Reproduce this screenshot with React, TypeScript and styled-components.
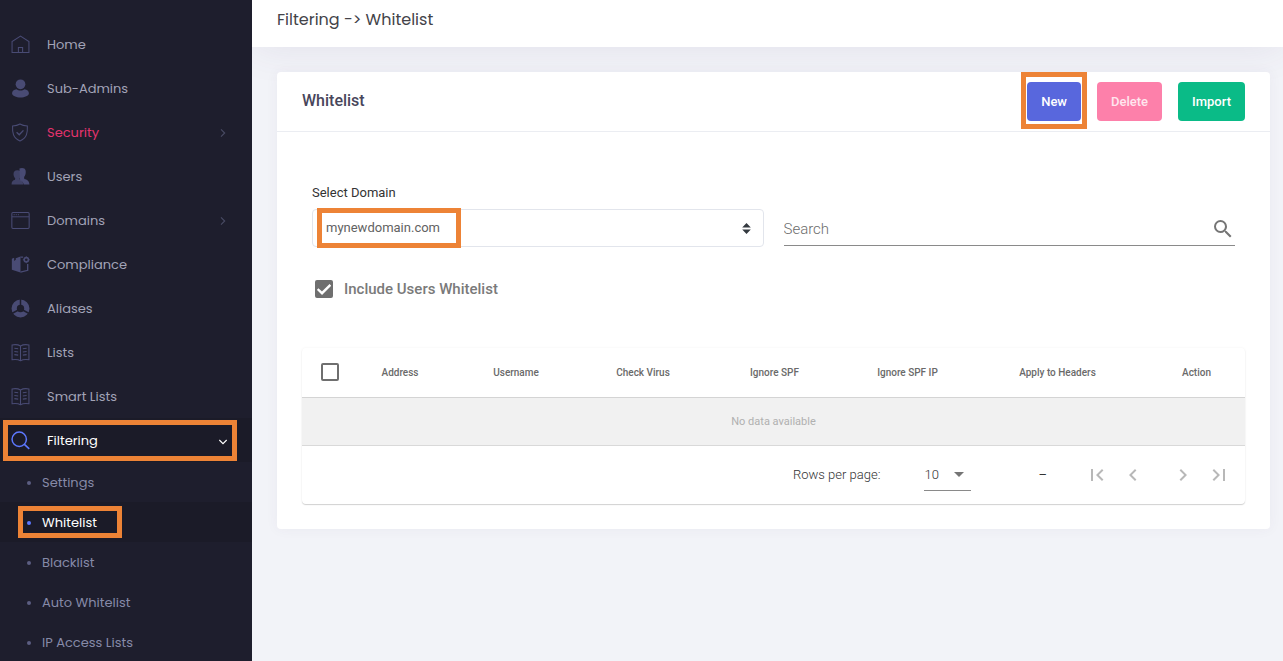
import React from "react";
import styled, { createGlobalStyle, css } from "styled-components";

const MENU_FONT = `Poppins, Inter, "Open Sans", sans-serif`;
const ORANGE = "#ed8336";

const GlobalStyle = createGlobalStyle`
  *, *::before, *::after { box-sizing: border-box; }
  body {
    margin: 0;
    background: #f2f3f8;
    color: #464457;
    font-family: Roboto, "Liberation Sans", sans-serif;
    font-size: 13px;
  }
  button, input, select { font: inherit; color: inherit; }
`;

const Page = styled.div`
  display: flex;
  min-height: 100vh;
`;

/* ---------- Side menu ---------- */

const Sidebar = styled.nav`
  position: sticky;
  top: 0;
  flex: 0 0 252px;
  height: 100vh;
  padding-top: 22px;
  overflow-y: auto;
  scrollbar-width: none;
  background: #1e1e2d;
  font-family: ${MENU_FONT};
`;

const MenuList = styled.ul`
  margin: 0;
  padding: 0;
  list-style: none;
`;

const MenuLink = styled.a<{ $active?: boolean; $alert?: boolean }>`
  position: relative;
  display: flex;
  align-items: center;
  height: 44px;
  padding: 2px 23px 0 11px;
  gap: 17px;
  font-size: 13px;
  text-decoration: none;
  color: ${(p) => (p.$active ? "#ffffff" : p.$alert ? "#e4336d" : "#a2a3b7")};
  background: ${(p) => (p.$active ? "#1b1b28" : "transparent")};

  & > svg {
    flex: none;
    margin-bottom: 2px;
    color: ${(p) => (p.$active ? "#5d78ff" : "#494b74")};
  }
  & > svg:last-of-type:not(:first-of-type) {
    margin: 0 0 0 auto;
    color: ${(p) => (p.$active ? "#ffffff" : "#494b64")};
  }
`;

const SubLink = styled.a<{ $active?: boolean }>`
  position: relative;
  display: flex;
  align-items: center;
  height: 40px;
  padding: 2px 0 0 27px;
  gap: 11px;
  font-size: 13px;
  text-decoration: none;
  color: ${(p) => (p.$active ? "#ffffff" : "#868aa8")};
  background: ${(p) => (p.$active ? "#1b1b28" : "transparent")};

  &::before {
    content: "";
    width: 4px;
    height: 4px;
    border-radius: 50%;
    background: ${(p) => (p.$active ? "#5d78ff" : "#5c5e81")};
  }
`;

/* Orange frame laid over the control it points out. */
const Marker = styled.span<{ $inset: string; $width?: number }>`
  position: absolute;
  inset: ${(p) => p.$inset};
  width: ${(p) => (p.$width ? `${p.$width}px` : "auto")};
  border: 5px solid ${ORANGE};
  pointer-events: none;
`;

/* ---------- Main column ---------- */

const Main = styled.main`
  flex: 1;
  min-width: 0;
`;

const TopBar = styled.header`
  display: flex;
  align-items: center;
  height: 47px;
  padding: 0 25px 8px;
  background: #ffffff;
  box-shadow: 0 0 40px rgba(82, 63, 105, 0.1);
`;

const PageTitle = styled.h1`
  margin: 0;
  font-family: ${MENU_FONT};
  font-size: 16px;
  font-weight: 400;
  color: #434349;
`;

const Card = styled.section`
  margin: 25px 13px 25px 25px;
  background: #ffffff;
  border-radius: 4px;
  box-shadow: 0 0 13px rgba(82, 63, 105, 0.05);
`;

const CardHeader = styled.div`
  display: flex;
  align-items: center;
  justify-content: space-between;
  height: 60px;
  padding: 0 25px;
  border-bottom: 1px solid #ebedf2;
`;

const CardTitle = styled.h2`
  margin: 0;
  padding-bottom: 2px;
  font-size: 16px;
  font-weight: 500;
  color: #48465b;
`;

const Actions = styled.div`
  display: flex;
  gap: 16px;
`;

const ActionButton = styled.button<{ $color: string; $text?: string }>`
  position: relative;
  height: 39px;
  padding: 0 14px;
  border: 0;
  border-radius: 4px;
  background: ${(p) => p.$color};
  color: ${(p) => p.$text ?? "#ffffff"};
  font-size: 13px;
  font-weight: 500;
  cursor: pointer;
`;

const CardBody = styled.div`
  padding: 51px 25px 25px;
`;

const Filters = styled.div`
  display: grid;
  grid-template-columns: 1fr 1fr;
  align-items: end;
  gap: 0 20px;
  padding: 0 10px;
`;

const Field = styled.div`
  display: flex;
  flex-direction: column;
  gap: 6px;
`;

const FieldLabel = styled.label`
  line-height: 20px;
  color: #333333;
`;

const SelectBox = styled.div`
  position: relative;

  & > svg {
    position: absolute;
    right: 13px;
    top: 14px;
    pointer-events: none;
  }
`;

const DomainSelect = styled.select`
  display: block;
  width: 100%;
  height: 38px;
  padding: 0 30px 2px 13px;
  appearance: none;
  border: 1px solid #e2e5ec;
  border-radius: 4px;
  background: #ffffff;
  color: #626262;
`;

const SearchBox = styled.div`
  display: flex;
  align-items: center;
  height: 35px;
  margin-bottom: 1px;
  padding-top: 2px;
  border-bottom: 1px solid #8a8a8a;
`;

const SearchInput = styled.input`
  flex: 1;
  min-width: 0;
  padding: 0;
  border: 0;
  outline: 0;
  background: transparent;
  font-size: 15px;
  font-weight: 300;

  &::placeholder { color: #6c6c6c; opacity: 1; }
`;

const CheckLabel = styled.label`
  display: flex;
  align-items: center;
  gap: 11px;
  height: 24px;
  margin: 30px 13px 0;
  font-size: 15px;
  font-weight: 500;
  color: #7a7a7a;
`;

const CheckBox = styled.input`
  flex: none;
  width: 18px;
  height: 18px;
  margin: 0;
  appearance: none;
  border: 2px solid #6f6f6f;
  border-radius: 2px;
  background: #ffffff;

  &:checked {
    background: #6f6f6f url("data:image/svg+xml,%3Csvg xmlns='http://www.w3.org/2000/svg' viewBox='0 0 14 14'%3E%3Cpath d='M.6 7l4.400 4.200 8.400-8.400' fill='none' stroke='white' stroke-width='2.400'/%3E%3C/svg%3E") center / 14px 14px no-repeat;
  }
`;

const TableCard = styled.div`
  margin-top: 47px;
  border-radius: 4px;
  box-shadow: 0 1px 1px rgba(0, 0, 0, 0.17), 0 0 3px rgba(0, 0, 0, 0.05);
`;

const Table = styled.table`
  width: 100%;
  table-layout: fixed;
  border-collapse: collapse;
`;

const HeadCell = styled.th`
  height: 49px;
  padding: 0;
  border-bottom: 1px solid #d4d4d4;
  font-size: 10px;
  font-weight: 500;
  color: #6a6a6a;
  white-space: nowrap;

  &:first-child { padding-left: 19px; }
`;

const HeadCheck = styled(CheckBox)`
  display: block;
`;

const EmptyCell = styled.td`
  height: 48px;
  padding: 0;
  border-bottom: 1px solid #d9d9d9;
  background: #f1f1f1;
  text-align: center;
  font-size: 11px;
  color: #b0b0b0;
`;

const Pager = styled.div`
  display: flex;
  align-items: center;
  justify-content: flex-end;
  height: 58px;
  padding-right: 8px;
  color: #333333;
`;

const pagerText = css`
  font-size: 13px;
  font-weight: 300;
`;

const RowsLabel = styled.label`
  ${pagerText}
  margin-right: 44px;
`;

const RowsBox = styled.div`
  position: relative;

  & > svg {
    position: absolute;
    right: 0;
    top: 4px;
    color: #757575;
    pointer-events: none;
  }
`;

const RowsSelect = styled.select`
  ${pagerText}
  display: block;
  width: 47px;
  height: 33px;
  padding: 0;
  appearance: none;
  border: 0;
  border-bottom: 1px solid #8a8a8a;
  border-radius: 0;
  background: transparent;
`;

const Range = styled.span`
  margin: 0 32px 0 67px;
`;

const PagerButtons = styled.div`
  display: flex;
  gap: 14px;
`;

const PagerGroup = styled.div`
  display: flex;
`;

const IconButton = styled.button<{ $width?: number }>`
  display: flex;
  align-items: center;
  justify-content: center;
  width: ${(p) => p.$width ?? 36}px;
  height: 32px;
  padding: 0;
  border: 0;
  background: transparent;
  color: #757575;

  &:disabled { color: #b8b8b8; }
`;

/* ---------- Icons ---------- */

const Svg = ({ size = 19, children }: { size?: number; children: React.ReactNode }) => (
  <svg width={size} height={size} viewBox="0 0 18 18" fill="none" stroke="currentColor" aria-hidden="true">
    {children}
  </svg>
);

const HomeIcon = () => (
  <Svg>
    <path d="M1 16.500V6.200L9 1l8 5.200V16.500Z" />
    <path d="M7 16.500v-4.700h4v4.700" />
  </Svg>
);
const UserIcon = () => (
  <Svg>
    <g fill="currentColor" stroke="none">
      <circle cx="9" cy="5" r="4.600" />
      <path d="M1 13.500c0-2 1.800-3.300 4.200-3.700 1 .8 2.300 1.200 3.800 1.200s2.800-.4 3.800-1.200c2.400.4 4.200 1.700 4.200 3.700 0 2.500-4 4-8 4s-8-1.500-8-4z" />
    </g>
  </Svg>
);
const ShieldIcon = () => (
  <Svg>
    <path d="M8.500 1C6.500 2.300 4 2.800 1.500 2.800c-.3 6 .3 11.500 7 14.200 6.700-2.700 7.300-8.200 7-14.200C13 2.800 10.500 2.300 8.500 1z" />
    <path d="M5.300 8.800l2.500 2.400 4-4.200" strokeWidth="1.300" />
  </Svg>
);
const UsersIcon = () => (
  <Svg>
    <g fill="currentColor" stroke="none">
      <path d="M8 1.500c2-1 5.500-.8 5.900 2 .3 2.600-.3 4.500-1.500 6l.2 1.800c2.500.6 4.600 1.400 4.900 5.200H12c-.3-2-1.500-3.200-3.400-3.800z" />
      <path d="M6 3c2.800 0 4 1.700 3.700 4.200-.2 1.500-.7 2.600-1.500 3.500l.2 1.400c2 .5 3 1.600 3.100 4.400H.5c.1-2.800 1.200-3.900 3.300-4.400l.2-1.400C3 9.600 2.500 8.500 2.400 7 2.200 4.600 3.400 3 6 3z" opacity=".8" />
    </g>
  </Svg>
);
const WindowIcon = () => (
  <Svg>
    <rect x=".8" y="1.500" width="16.400" height="15" rx="1" />
    <path d="M1 5.500h16M2.500 3.500h1m1 0h1m1 0h1" strokeWidth=".9" />
  </Svg>
);
const ComplianceIcon = () => (
  <Svg>
    <path d="M.8 3.500L3 2.600v3l1.500-1V3L9 1.500v15L.8 14z" fill="currentColor" stroke="none" />
    <path d="M9 2h2.500M9 16.200l6.800-1.700V8.500" strokeWidth="1.300" />
    <circle cx="14.500" cy="4.500" r="2" strokeWidth="1.500" />
    <path d="M14.500 1.200v1.600M14.500 6.200v1.600M11.200 4.500h1.600M16.200 4.500h1.600" strokeWidth=".8" />
  </Svg>
);
const AliasIcon = () => (
  <Svg>
    <circle cx="9" cy="9" r="6" strokeWidth="5" />
    <path d="M9 0v6M1.200 13.500L7 10.400M16.800 13.500L11 10.400" stroke="#1e1e2d" strokeWidth="1.400" />
  </Svg>
);
const BookIcon = () => (
  <Svg>
    <path d="M9 2.800C7 1.600 4 1.300 1 1.800v14c3-.5 6-.2 8 1 2-1.200 5-1.500 8-1v-14c-3-.5-6-.2-8 1zm0 0v14" />
    <path d="M3.200 5l3.600.5M3.200 8l3.600.5M3.200 11l3.600.5M14.800 5l-3.600.5M14.800 8l-3.600.5M14.800 11l-3.600.5" />
  </Svg>
);
const LensIcon = () => (
  <Svg>
    <circle cx="7.800" cy="7.800" r="6.800" strokeWidth="1.400" />
    <path d="M12.700 12.700l4.600 4.300" strokeWidth="1.500" />
  </Svg>
);
const ChevronRight = () => (
  <Svg size={12}>
    <path d="M6 3.500L11.500 9 6 14.500" strokeWidth="1.700" />
  </Svg>
);
const ChevronDown = () => (
  <Svg size={12}>
    <path d="M3.500 7.500L9 13l5.500-5.500" strokeWidth="1.700" />
  </Svg>
);

const MaterialIcon = ({ d }: { d: string }) => (
  <svg width="24" height="24" viewBox="0 0 24 24" fill="currentColor" aria-hidden="true">
    <path d={d} />
  </svg>
);

const SEARCH = "M9.500 3A6.500 6.500 0 0 1 16 9.500c0 1.610-.59 3.090-1.560 4.230l.27.27h.79l5 5-1.500 1.500-5-5v-.79l-.27-.27A6.516 6.516 0 0 1 9.500 16 6.500 6.500 0 0 1 3 9.500 6.500 6.500 0 0 1 9.500 3m0 2C7 5 5 7 5 9.500S7 14 9.500 14 14 12 14 9.500 12 5 9.500 5z";
const FIRST = "M18.410 16.590L13.820 12l4.590-4.590L17 6l-6 6 6 6zM6 6h2v12H6z";
const PREV = "M15.410 16.580L10.830 12l4.580-4.590L14 6l-6 6 6 6z";
const NEXT = "M8.590 16.580L13.170 12 8.590 7.410 10 6l6 6-6 6z";
const LAST = "M5.590 7.410L10.180 12l-4.590 4.590L7 18l6-6-6-6zM16 6h2v12h-2z";
const DROP = "M7 10l5 5 5-5z";

/* ---------- Data ---------- */

const menu = [
  { label: "Home", Icon: HomeIcon },
  { label: "Sub-Admins", Icon: UserIcon },
  { label: "Security", Icon: ShieldIcon, alert: true, more: true },
  { label: "Users", Icon: UsersIcon },
  { label: "Domains", Icon: WindowIcon, more: true },
  { label: "Compliance", Icon: ComplianceIcon },
  { label: "Aliases", Icon: AliasIcon },
  { label: "Lists", Icon: BookIcon },
  { label: "Smart Lists", Icon: BookIcon },
];

const filteringMenu = ["Settings", "Whitelist", "Blacklist", "Auto Whitelist", "IP Access Lists"];

const columns = [
  { label: "Address", width: 94 },
  { label: "Username", width: 138 },
  { label: "Check Virus", width: 116 },
  { label: "Ignore SPF", width: 147 },
  { label: "Ignore SPF IP", width: 119 },
  { label: "Apply to Headers", width: 181 },
  { label: "Action", width: 97 },
];

export default function App() {
  return (
    <>
      <GlobalStyle />
      <Page>
        <Sidebar aria-label="Main menu">
          <MenuList>
            {menu.map(({ label, Icon, alert, more }) => (
              <li key={label}>
                <MenuLink href="#" $alert={alert}>
                  <Icon />
                  {label}
                  {more && <ChevronRight />}
                </MenuLink>
              </li>
            ))}
            <li>
              <MenuLink href="#" $active>
                <LensIcon />
                Filtering
                <ChevronDown />
                <Marker $inset="2px 15px 1px 3px" />
              </MenuLink>
              <MenuList>
                {filteringMenu.map((label) => (
                  <li key={label}>
                    <SubLink href="#" $active={label === "Whitelist"}>
                      {label}
                      {label === "Whitelist" && <Marker $inset="4px auto 4px 18px" $width={104} />}
                    </SubLink>
                  </li>
                ))}
              </MenuList>
            </li>
          </MenuList>
        </Sidebar>

        <Main>
          <TopBar>
            <PageTitle>Filtering -&gt; Whitelist</PageTitle>
          </TopBar>

          <Card>
            <CardHeader>
              <CardTitle>Whitelist</CardTitle>
              <Actions>
                <ActionButton $color="#5867dd">
                  New
                  <Marker $inset="-10px -6px -8px -6px" />
                </ActionButton>
                <ActionButton $color="#fd80aa" $text="#ffe6ee">Delete</ActionButton>
                <ActionButton $color="#0abb87">Import</ActionButton>
              </Actions>
            </CardHeader>

            <CardBody>
              <Filters>
                <Field>
                  <FieldLabel htmlFor="domain">Select Domain</FieldLabel>
                  <SelectBox>
                    <DomainSelect id="domain">
                      <option>mynewdomain.com</option>
                    </DomainSelect>
                    <svg width="9" height="11" viewBox="0 0 9 11" fill="#343a40" aria-hidden="true">
                      <path d="M4.500 0L8.800 4.500H.2zM4.500 11L.2 6.500h8.600z" />
                    </svg>
                    <Marker $inset="-1px auto -1px 5px" $width={144} />
                  </SelectBox>
                </Field>
                <SearchBox>
                  <SearchInput type="text" placeholder="Search" aria-label="Search" />
                  <IconButton $width={24} aria-label="Search">
                    <MaterialIcon d={SEARCH} />
                  </IconButton>
                </SearchBox>
              </Filters>

              <CheckLabel>
                <CheckBox type="checkbox" defaultChecked />
                Include Users Whitelist
              </CheckLabel>

              <TableCard>
                <Table>
                  <colgroup>
                    <col width={51} />
                    {columns.map((c) => (
                      <col key={c.label} width={c.width} />
                    ))}
                  </colgroup>
                  <thead>
                    <tr>
                      <HeadCell scope="col">
                        <HeadCheck type="checkbox" aria-label="Select all rows" />
                      </HeadCell>
                      {columns.map((c) => (
                        <HeadCell key={c.label} scope="col">{c.label}</HeadCell>
                      ))}
                    </tr>
                  </thead>
                  <tbody>
                    <tr>
                      <EmptyCell colSpan={columns.length + 1}>No data available</EmptyCell>
                    </tr>
                  </tbody>
                </Table>
                <Pager>
                  <RowsLabel htmlFor="rows">Rows per page:</RowsLabel>
                  <RowsBox>
                    <RowsSelect id="rows">
                      <option>10</option>
                    </RowsSelect>
                    <MaterialIcon d={DROP} />
                  </RowsBox>
                  <Range>–</Range>
                  <PagerButtons>
                    <PagerGroup>
                      <IconButton disabled aria-label="First page"><MaterialIcon d={FIRST} /></IconButton>
                      <IconButton disabled aria-label="Previous page"><MaterialIcon d={PREV} /></IconButton>
                    </PagerGroup>
                    <PagerGroup>
                      <IconButton disabled aria-label="Next page"><MaterialIcon d={NEXT} /></IconButton>
                      <IconButton disabled aria-label="Last page"><MaterialIcon d={LAST} /></IconButton>
                    </PagerGroup>
                  </PagerButtons>
                </Pager>
              </TableCard>
            </CardBody>
          </Card>
        </Main>
      </Page>
    </>
  );
}
